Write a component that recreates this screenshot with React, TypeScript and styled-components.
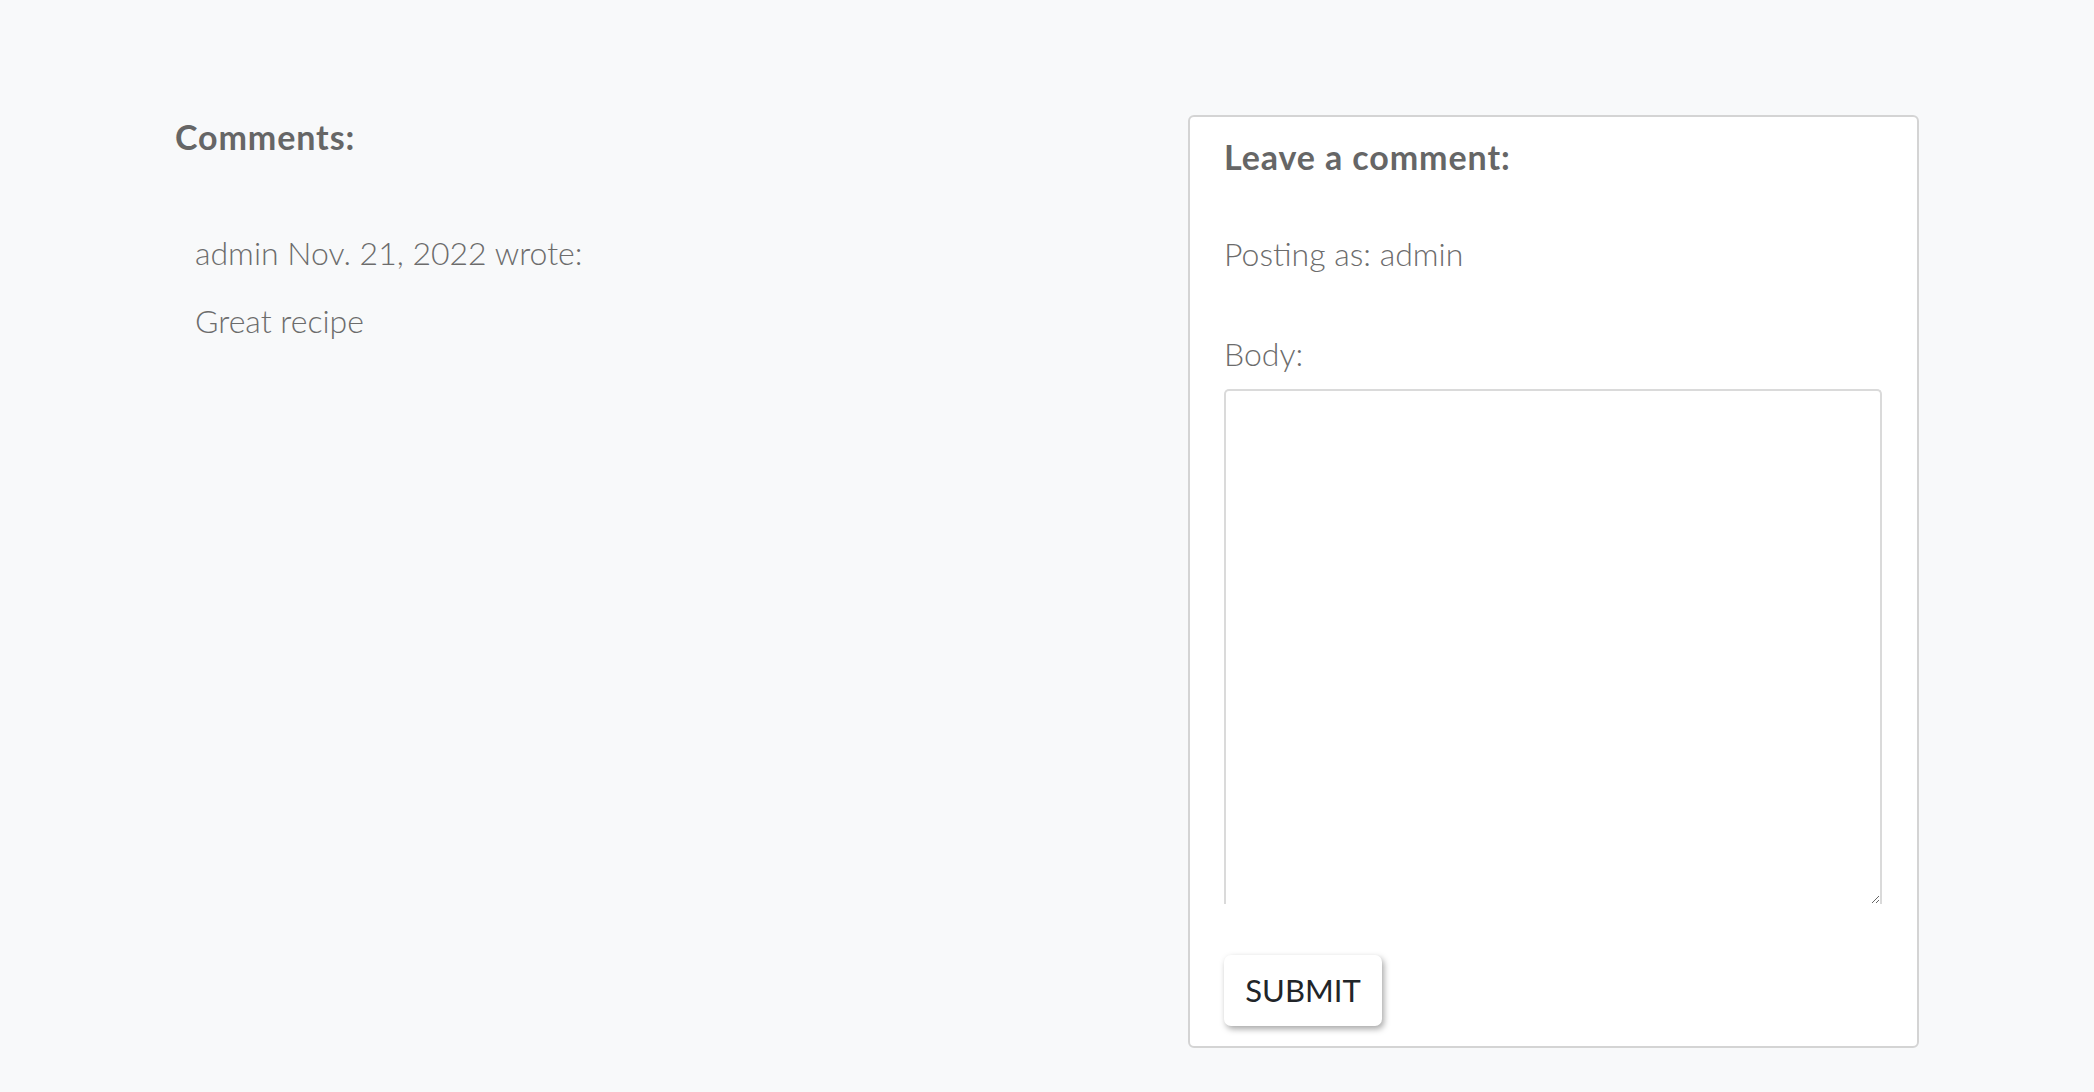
import React from 'react'
import styled, { createGlobalStyle } from 'styled-components'

const GlobalStyle = createGlobalStyle`
  html, body {
    margin: 0;
    padding: 0;
    background-color: #f8f9fa;
    font-family: Lato, "Liberation Sans", sans-serif;
  }
`

const Page = styled.main`
  min-height: 1092px;
  box-sizing: border-box;
  padding: 115px 175px 0 175px;
  display: grid;
  grid-template-columns: 1fr 731px;
  column-gap: 40px;
  align-items: start;
`

const CommentsColumn = styled.section`
  display: flex;
  flex-direction: column;
  padding-top: 2px;
`

const Heading = styled.h3`
  margin: 0;
  font-size: 34px;
  line-height: 1.2;
  font-weight: 700;
  color: #666666;
  letter-spacing: 0.9px;
`

const CommentList = styled.div`
  margin-top: 76px;
  padding-left: 20px;
  display: flex;
  flex-direction: column;
  gap: 30px;
`

const Line = styled.p`
  margin: 0;
  font-size: 32px;
  line-height: 1.2;
  font-weight: 300;
  color: #6c6c6c;
`

const Card = styled.section`
  box-sizing: border-box;
  background-color: #ffffff;
  border: 2px solid #d4d4d4;
  border-radius: 6px;
  padding: 20px 35px 20px 34px;
  height: 933px;
  display: flex;
  flex-direction: column;
`

const Form = styled.form`
  display: flex;
  flex-direction: column;
`

const Label = styled.label<{ $gap: number }>`
  display: block;
  margin: ${p => p.$gap}px 0 0 0;
  font-size: 32px;
  line-height: 1.2;
  font-weight: 300;
  color: #6c6c6c;
`

const BodyInput = styled.textarea`
  box-sizing: border-box;
  margin-top: 15px;
  width: 658px;
  height: 515px;
  border: 2px solid #dadada;
  border-bottom: none;
  border-radius: 5px 5px 0 0;
  background: #ffffff;
  font-family: Lato, "Liberation Sans", sans-serif;
  font-size: 28px;
  resize: vertical;
  outline: none;
`

const SubmitButton = styled.button`
  margin-top: 51px;
  width: 158px;
  height: 71px;
  border: none;
  border-radius: 7px;
  background: #ffffff;
  box-shadow: 2px 3px 6px rgba(0, 0, 0, 0.35);
  font-family: Lato, "Liberation Sans", sans-serif;
  font-size: 31px;
  font-weight: 400;
  color: #212529;
  cursor: pointer;
  align-self: flex-start;
`

const comments = [
  { author: 'admin', date: 'Nov. 21, 2022', body: 'Great recipe' }
]

const App: React.FC = () => {
  return (
    <>
      <GlobalStyle />
      <Page>
        <CommentsColumn>
          <Heading>Comments:</Heading>
          {comments.map((c, i) => (
            <CommentList key={i}>
              <Line>{c.author} {c.date} wrote:</Line>
              <Line>{c.body}</Line>
            </CommentList>
          ))}
        </CommentsColumn>
        <Card>
          <Heading>Leave a comment:</Heading>
          <Form onSubmit={e => e.preventDefault()}>
            <Label $gap={57} as='p'>Posting as: admin</Label>
            <Label $gap={62} htmlFor='id_body'>Body:</Label>
            <BodyInput id='id_body' name='body' />
            <SubmitButton type='submit'>SUBMIT</SubmitButton>
          </Form>
        </Card>
      </Page>
    </>
  )
}

export default App
